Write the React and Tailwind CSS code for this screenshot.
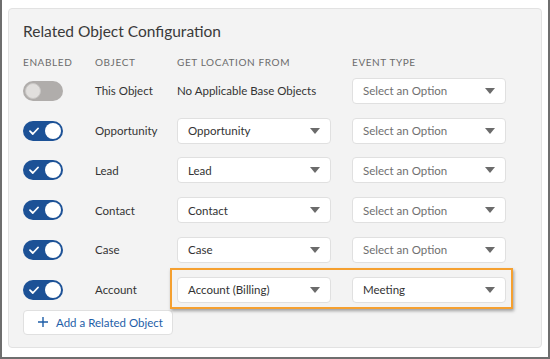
import { useState } from 'react'

const rows = [
  { name: 'This Object', enabled: false, location: null, event: null },
  { name: 'Opportunity', enabled: true, location: 'Opportunity', event: null },
  { name: 'Lead', enabled: true, location: 'Lead', event: null },
  { name: 'Contact', enabled: true, location: 'Contact', event: null },
  { name: 'Case', enabled: true, location: 'Case', event: null },
  { name: 'Account', enabled: true, location: 'Account (Billing)', event: 'Meeting', highlight: true },
]

function Toggle({ on }) {
  if (!on) {
    return (
      <div className="w-10 h-5 rounded-full bg-[#b0adab] flex items-center px-[2px]">
        <div className="w-4 h-4 rounded-full bg-[#e1dfdd] border border-[#c9c7c5]" />
      </div>
    )
  }
  return (
    <div className="w-10 h-5 rounded-full bg-[#1c5196] flex items-center justify-between pl-[6px] pr-[2px]">
      <svg width="10" height="8" viewBox="0 0 10 8">
        <path d="M1 4.2 L3.8 7 L9 1.5" fill="none" stroke="white" strokeWidth="1.8" strokeLinecap="round" strokeLinejoin="round" />
      </svg>
      <div className="w-4 h-4 rounded-full bg-white" />
    </div>
  )
}

function Select({ value, placeholder = 'Select an Option' }) {
  return (
    <div className="h-[26px] w-[154px] bg-white border border-[#e0e0e0] rounded flex items-center justify-between pl-[10px] pr-[10px]">
      <span className={value ? 'text-[#333]' : 'text-[#6f6f6f]'}>{value || placeholder}</span>
      <svg width="10" height="6" viewBox="0 0 10 6">
        <path d="M0 0 H10 L5 6 Z" fill="#6b6b6b" />
      </svg>
    </div>
  )
}

export default function App() {
  const [items] = useState(rows)

  return (
    <div className="w-[550px] h-[359px] bg-white border-x-2 border-b-2 border-[#6e6e6e] pt-2 pl-[6px] pr-[6px] font-['Lato',sans-serif] text-[11.5px]">
      <div className="h-[340px] bg-[#f3f3f3] border border-[#e2e2e2] rounded pl-[14px] pt-[10px]">
        <h1 className="text-[15.5px] leading-6 text-[#3a3a3a] font-normal">Related Object Configuration</h1>
        <div className="grid grid-cols-[72px_82px_175px_154px] text-[10px] tracking-[0.6px] text-[#6b6b6b] mt-[11px] h-[16px] items-center">
          <div>ENABLED</div>
          <div>OBJECT</div>
          <div>GET LOCATION FROM</div>
          <div>EVENT TYPE</div>
        </div>
        <div className="mt-[1px]">
          {items.map((row) => (
            <div key={row.name} className="relative grid grid-cols-[72px_82px_175px_154px] h-[39.8px] items-center text-[#333]">
              <Toggle on={row.enabled} />
              <div>{row.name}</div>
              <div>{row.location ? <Select value={row.location} /> : 'No Applicable Base Objects'}</div>
              <Select value={row.event} />
              {row.highlight && (
                <div className="absolute left-[147px] top-[-2px] w-[343px] h-[41px] border-2 border-[#f5a030] shadow-[1px_2px_3px_rgba(0,0,0,0.35)]" />
              )}
            </div>
          ))}
        </div>
        <button className="h-[25px] w-[150px] bg-white border border-[#e0e0e0] rounded flex items-center gap-[8px] pl-[14px] text-[#1e5ea8] whitespace-nowrap">
          <svg width="10" height="10" viewBox="0 0 10 10">
            <path d="M5 0 V10 M0 5 H10" stroke="#1e5ea8" strokeWidth="1.4" />
          </svg>
          <span>Add a Related Object</span>
        </button>
      </div>
    </div>
  )
}
